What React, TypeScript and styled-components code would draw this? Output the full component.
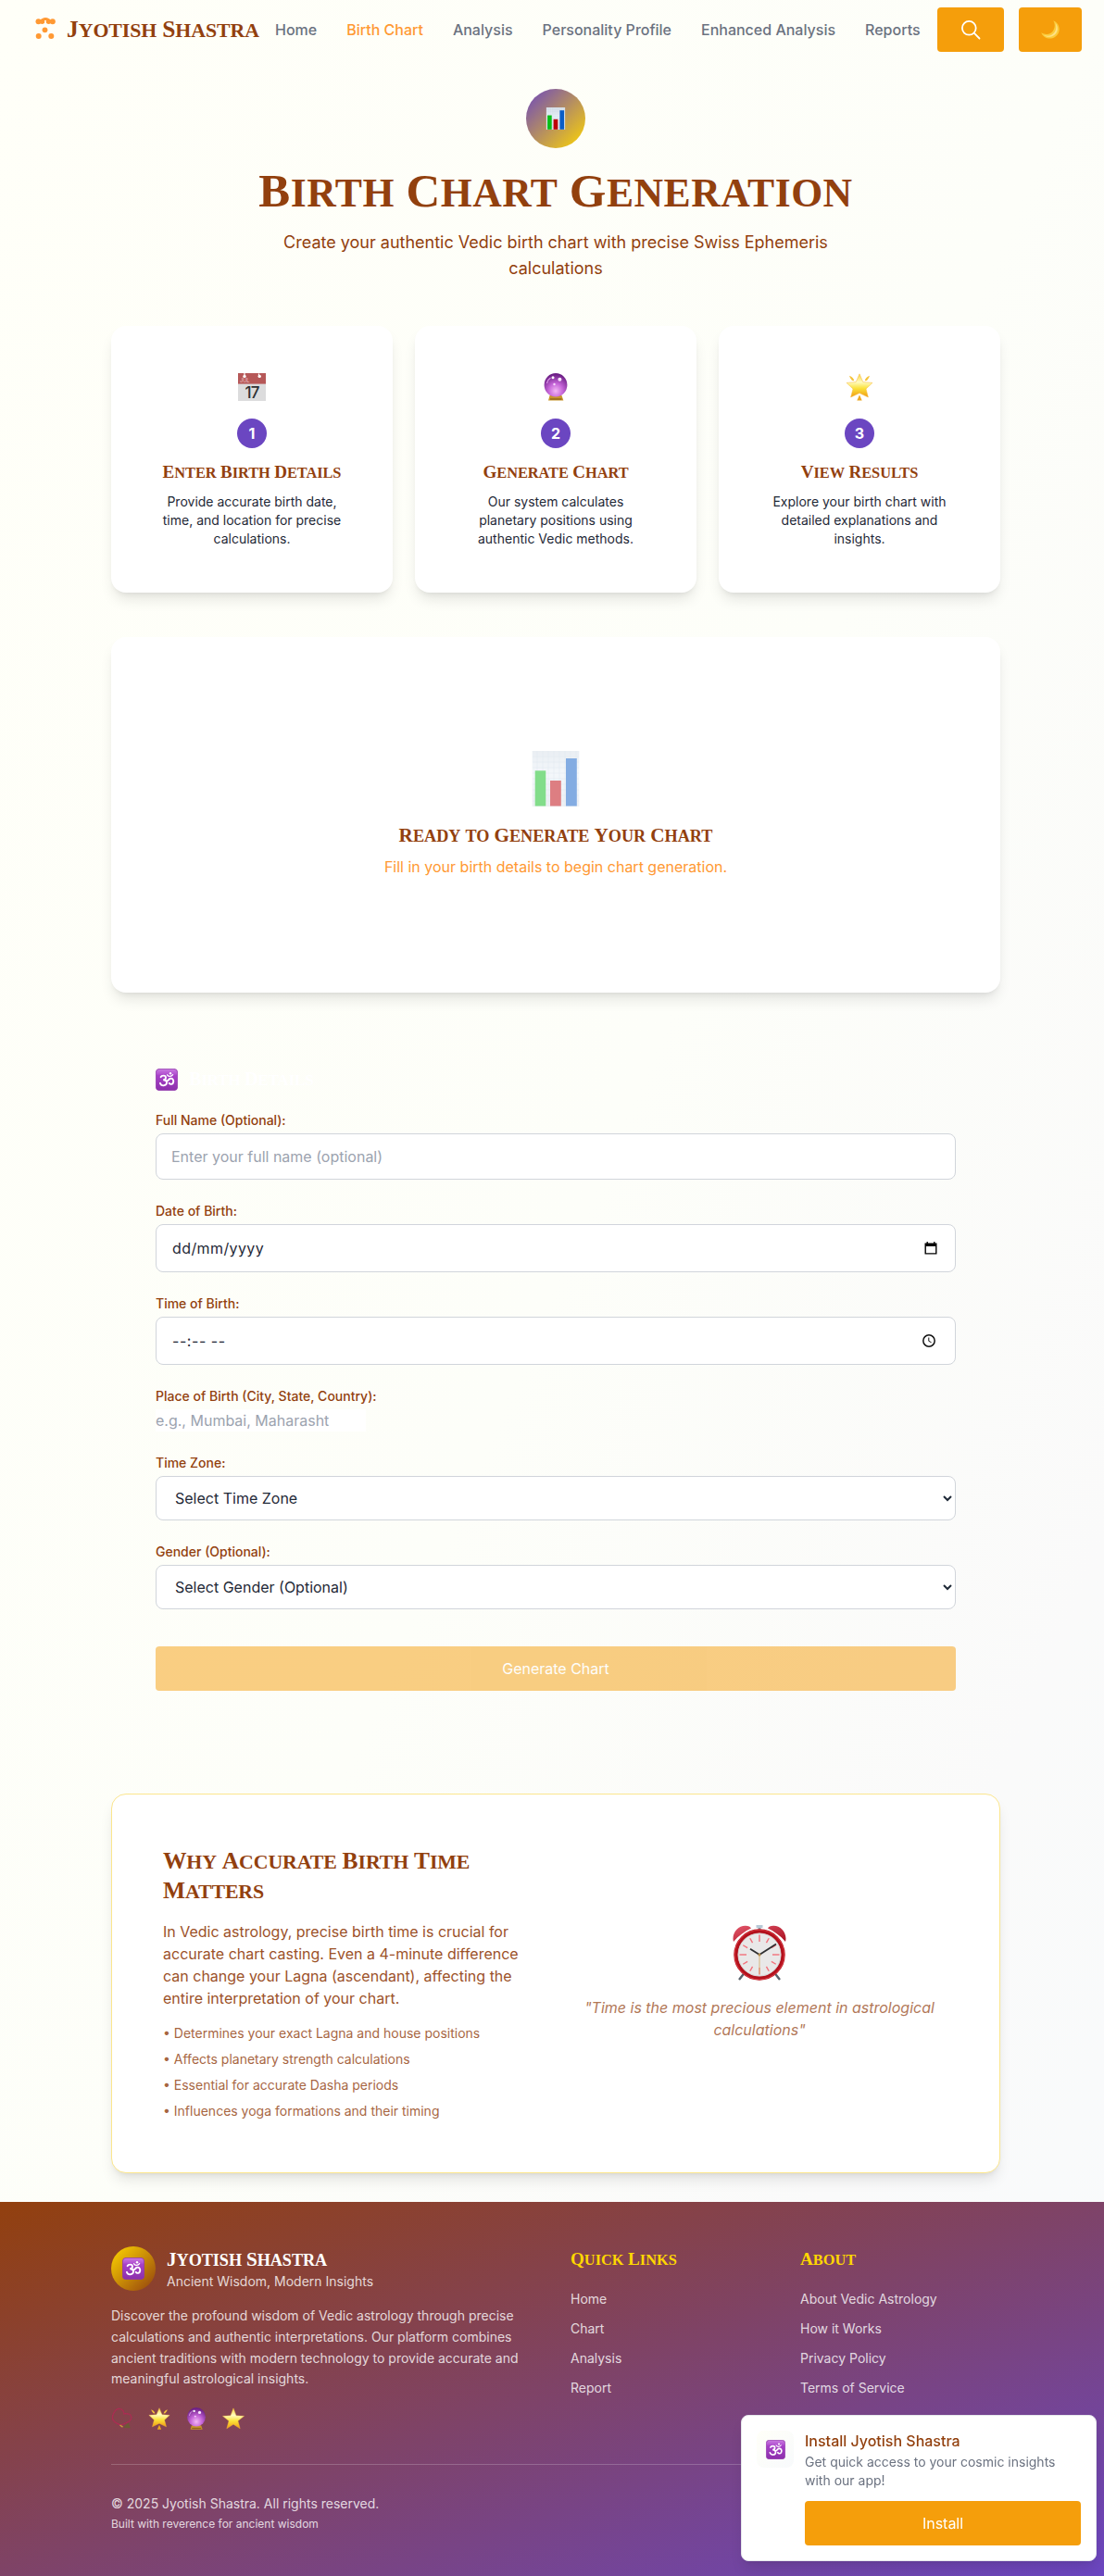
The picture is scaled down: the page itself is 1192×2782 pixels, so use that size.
import React from "react";
import styled, { createGlobalStyle, css } from "styled-components";

const sans = `Inter, "Liberation Sans", sans-serif`;
const serif = `"Liberation Serif", serif`;
const brown = "#92400e";
const amber = "#f59e0b";
const saffron = "#ff9933";

const GlobalStyle = createGlobalStyle`
  *, *::before, *::after { box-sizing: border-box; }
  body {
    margin: 0;
    font-family: ${sans};
    font-size: 16px;
    line-height: 24px;
    color: #1f2937;
  }
  h1, h2, h3, h4, p, ul { margin: 0; padding: 0; font-size: inherit; font-weight: inherit; }
  ul { list-style: none; }
  a { color: inherit; text-decoration: none; }
  svg { display: block; flex: none; }
`;

/* ---------- display lettering ---------- */

const Word = styled.span`
  white-space: nowrap;
`;
const Initial = styled.span`
  font-size: 1.06em;
  line-height: 1;
`;
const Tail = styled.span`
  font-size: 0.91em;
  line-height: 1;
  text-transform: uppercase;
`;

function Caps({ children }: { children: string }) {
  return (
    <>
      {children.split(" ").map((word, i) => {
        const lead = /^[A-Z]/.test(word) ? word[0] : "";
        return (
          <React.Fragment key={i}>
            {i > 0 && " "}
            <Word>
              {lead && <Initial>{lead}</Initial>}
              <Tail>{word.slice(lead.length)}</Tail>
            </Word>
          </React.Fragment>
        );
      })}
    </>
  );
}

const display = css<{ $size: number; $track?: number }>`
  font-family: ${serif};
  font-weight: 700;
  font-size: ${(p) => p.$size}px;
  letter-spacing: ${(p) => p.$track ?? 0}px;
  color: ${brown};
`;

/* ---------- drawings ---------- */

type IconProps = { size: number };

const BarChart = ({ size }: IconProps) => (
  <svg width={size} height={size} viewBox="0 0 60 60">
    <defs>
      <linearGradient id="paper" x1="0" y1="0" x2="0" y2="1">
        <stop offset="0" stopColor="#d6dfe8" />
        <stop offset=".4" stopColor="#eaf1f8" />
        <stop offset="1" stopColor="#dce2ea" />
      </linearGradient>
    </defs>
    <rect x="4.7" y="0" width="50.6" height="60" fill="url(#paper)" />
    <path
      d="M10 0v60M16 0v60M22 0v60M28 0v60M34 0v60M40 0v60M46 0v60M52 0v60M5 6h50M5 12h50M5 18h50M5 24h50M5 30h50M5 36h50M5 42h50M5 48h50M5 54h50"
      stroke="#c3d2e2"
      strokeWidth=".5"
    />
    <rect x="7.7" y="21.3" width="11.6" height="38.2" fill="#08bd17" />
    <rect x="24" y="32" width="11.8" height="27.5" fill="#bd0008" />
    <rect x="41" y="8" width="11.8" height="51.5" fill="#0a5cc7" />
  </svg>
);

const CalendarPage = ({ size }: IconProps) => (
  <svg width={size} height={size} viewBox="0 0 30 30">
    <rect width="30" height="30" fill="#dcdcdd" />
    <rect width="30" height="11.6" fill="#b65858" />
    <path d="M7 0v3.6M22.5 0.6v3" stroke="#fff" strokeWidth="1.2" />
    <circle cx="7" cy="3.4" r="1.7" fill="#fff" />
    <circle cx="23.2" cy="3.4" r="1.7" fill="#fff" />
    <text x="2" y="10" fontFamily="Inter" fontSize="5.6" fill="#f1c9c9">JUL</text>
    <text x="15" y="26.8" textAnchor="middle" fontFamily="Inter" fontWeight="500" fontSize="17" letterSpacing="-1" fill="#2f3033">17</text>
  </svg>
);

const CrystalBall = ({ size }: IconProps) => (
  <svg width={size} height={size} viewBox="0 0 30 30">
    <defs>
      <radialGradient id="orb" cx=".5" cy=".75" r=".7">
        <stop offset="0" stopColor="#f3b7f5" />
        <stop offset=".45" stopColor="#c565d8" />
        <stop offset="1" stopColor="#6d1f86" />
      </radialGradient>
    </defs>
    <path d="M7 29.6L8.6 24H21.4L23.4 29.6Z" fill="#c8952b" />
    <path d="M9 28h12.5" stroke="#7a5313" strokeWidth="1" />
    <ellipse cx="15" cy="12.8" rx="12.4" ry="12.7" fill="url(#orb)" />
    <circle cx="12" cy="4.8" r="1.5" fill="#fff" />
    <circle cx="19.4" cy="6.8" r="2" fill="#fbe6ff" />
    <circle cx="13.5" cy="12" r="1.2" fill="#f7d8fb" />
    <path d="M5.5 11c.6-3 2-4.8 4-6" stroke="#dd9bea" strokeWidth="1.2" fill="none" />
  </svg>
);

const StarFill = () => (
  <defs>
    <linearGradient id="gold" x1="0" y1="0" x2="0" y2="1">
      <stop offset="0" stopColor="#fbd53f" />
      <stop offset=".35" stopColor="#fffbc0" />
      <stop offset=".62" stopColor="#fbe23b" />
      <stop offset="1" stopColor="#f09a12" />
    </linearGradient>
  </defs>
);

const GlowingStar = ({ size }: IconProps) => (
  <svg width={size} height={size} viewBox="0 0 30 30">
    <StarFill />
    <path
      d="M15 .8L18.8 9.6L29 10.4L22 17L24.4 26L15 21.6L5.6 26L8 17L1 10.4L11.2 9.6Z"
      fill="url(#gold)"
      stroke="#f6b93c"
      strokeWidth=".5"
      strokeLinejoin="round"
    />
    <path d="M4 2.8Q8.6 4.6 9.3 8.2L7 7.9Q4.6 5.6 4 2.8ZM26 2.8Q21.400 4.6 20.700 8.2L23 7.9Q25.400 5.6 26 2.8Z" fill="#f5c33b" />
    <path d="M15 23.400L17.700 29.6H12.300Z" fill="#eea71f" />
  </svg>
);

const Star = ({ size }: IconProps) => (
  <svg width={size} height={size} viewBox="0 0 30 30">
    <StarFill />
    <path
      d="M15 1L18.800 11L29.500 11.600L21.200 18.200L24 28.500L15 22.800L6 28.500L8.800 18.200L.5 11.600L11.200 11Z"
      fill="url(#gold)"
      stroke="#f6b93c"
      strokeWidth=".5"
      strokeLinejoin="round"
    />
  </svg>
);

const PrayerBeads = ({ size }: IconProps) => (
  <svg width={size} height={size} viewBox="0 0 24 24" fill="none">
    <path
      d="M9.500 18.500C4.500 17 1 14 1.500 10C2 6 5 1.500 8.500 1.400C12 1.400 13.800 4 14 7C18 6 22 7.500 21.800 10.800C21.500 14 18.500 16 15 17.200C12.500 18.300 11.500 18.900 9.500 18.500Z"
      stroke="#bb2456"
      strokeWidth="1.200"
      strokeDasharray="1.300 .4"
    />
    <path d="M9.500 19l3 2.200" stroke="#c99a3c" strokeWidth="1.500" />
    <path d="M13 21.800l5.500-5.300 2.500 5.800z" fill="#6c5a35" />
  </svg>
);

const Moon = ({ size }: IconProps) => (
  <svg width={size} height={size} viewBox="0 0 20 20">
    <path d="M13.200 .2C21 3.200 22 13.500 15 18C9.500 21.500 2.500 19 .2 13.200C5 16.200 10.500 15.200 13.200 11C15.300 7.600 15.200 3.400 13.200 .2Z" fill="#fbcb3c" />
    <path d="M15.500 3C19 7 18.500 13 14.200 16C10 18.800 5.500 18 3 16C8 17.500 12 16.500 14.500 13C16.600 10 16.800 6.500 15.500 3Z" fill="#fde28a" />
  </svg>
);

const Om = ({ size }: IconProps) => (
  <svg width={size} height={size} viewBox="0 0 24 24" fill="none">
    <defs>
      <linearGradient id="tile" x1="0" y1="0" x2="0" y2="1">
        <stop offset="0" stopColor="#c97be0" />
        <stop offset=".22" stopColor="#b455d2" />
        <stop offset=".3" stopColor="#a741c8" />
        <stop offset="1" stopColor="#8c2fab" />
      </linearGradient>
    </defs>
    <rect x=".4" y=".4" width="23.200" height="23.200" rx="3.600" fill="url(#tile)" stroke="#8f35ab" strokeWidth=".8" />
    <g stroke="#fff" strokeWidth="1.900" strokeLinecap="round">
      <path d="M5.600 9.200C6.300 7.300 11 6.800 11 9.700C11 11.700 9.500 12.200 8.200 12.200C10.200 12.100 12.200 13.200 12 15.500C11.700 18.800 6.200 19.600 4.900 15.800" />
      <path d="M11.500 13.300C13.500 14.200 13.800 11.200 16 10.700C18.500 10.300 19.600 12.500 19.200 14.500C18.800 17.200 15.800 17.600 14.700 15.700" />
      <path d="M12.600 6.800C14 9 17 8.900 18.600 6.600" strokeWidth="1.300" />
    </g>
    <circle cx="16" cy="5.200" r="1.200" fill="#fff" />
  </svg>
);

const AlarmClock = ({ size }: IconProps) => (
  <svg width={size} height={size} viewBox="0 0 60 60" fill="none">
    <defs>
      <linearGradient id="bell" x1="0" y1="0" x2="1" y2="1">
        <stop offset="0" stopColor="#e2566a" />
        <stop offset="1" stopColor="#a90f20" />
      </linearGradient>
    </defs>
    <path d="M13.500 52L8 59M46.500 52L52 59" stroke="#59616b" strokeWidth="2.400" />
    <path d="M30 2v5" stroke="#8d99a6" strokeWidth="3" />
    <path d="M26.500 1.500h7" stroke="#b9c9d6" strokeWidth="3" />
    <path d="M2 18C-.5 9 7 .5 15 .8C18 1 20.500 2 21 3.500C14 7 7 11.500 2 18ZM58 18C60.500 9 53 .5 45 .8C42 1 39.500 2 39 3.500C46 7 53 11.500 58 18Z" fill="url(#bell)" />
    <circle cx="30" cy="32" r="25.500" fill="#e9e8e8" stroke="#b3101c" strokeWidth="4.400" />
    <circle cx="30" cy="32" r="26.800" stroke="#e0444b" strokeWidth=".8" />
    <circle cx="30" cy="32" r="23" stroke="#cfcfcf" strokeWidth=".8" />
    <g stroke="#f2707a" strokeWidth="1.400">
      {Array.from({ length: 12 }, (_, i) => (
        <path key={i} d={i % 3 ? "M30 11.500v5.600" : "M30 10.500v7.500"} transform={`rotate(${i * 30} 30 32)`} />
      ))}
    </g>
    <path d="M30 32v21" stroke="#d8b77d" strokeWidth="1" />
    <path d="M30 32L20 25.800M30 32L48 20.500" stroke="#2e2f31" strokeWidth="1.800" />
    <circle cx="30" cy="32" r="1.500" fill="#b18a4a" />
  </svg>
);

const LogoMark = () => (
  <svg width="32" height="32" viewBox="0 0 32 32" fill={saffron}>
    <circle cx="8.500" cy="7.300" r="3" />
    <circle cx="12.500" cy="7.300" r="2.700" />
    <circle cx="19.500" cy="7.300" r="2.700" />
    <circle cx="23.800" cy="7.300" r="3" />
    <path d="M11 6.500C11.500 1.800 20.800 1.800 21.300 6.500L18 7.500V6H14.500V7.500Z" />
    <path d="M13.500 9H15V6.500H13.500zM17.600 9h1.500V6.500h-1.500z" />
    <circle cx="15.500" cy="16.300" r="2.900" />
    <circle cx="8.700" cy="23" r="3" />
    <circle cx="22.300" cy="23" r="3" />
  </svg>
);

const SearchIcon = () => (
  <svg width="24" height="24" viewBox="0 0 24 24" fill="none" stroke="#fff" strokeWidth="1.800" strokeLinecap="round">
    <circle cx="10.300" cy="10.300" r="7.400" />
    <path d="M15.700 15.700L21.500 21.500" />
  </svg>
);

const DateIcon = () => (
  <svg width="16" height="16" viewBox="0 0 16 16">
    <path d="M1.500 2.500h13v12h-13zM2.900 6v7.200h10.200V6z" fill="#000" fillRule="evenodd" />
    <path d="M4.200 1v2M11.800 1v2" stroke="#000" strokeWidth="1.300" />
  </svg>
);

const TimeIcon = () => (
  <svg width="16" height="16" viewBox="0 0 16 16" fill="none" stroke="#111">
    <circle cx="8" cy="8" r="6.200" strokeWidth="1.500" />
    <path d="M7.800 4.500V8.300L10.600 9.800" strokeWidth="1" />
  </svg>
);

/* ---------- page shell ---------- */

const Page = styled.div`
  display: flex;
  flex-direction: column;
  min-height: 2782px;
  background: linear-gradient(to bottom right, #fffff8, #fdfef9 50%, #fafafa 80%, #f8fafc);
`;

const Header = styled.header`
  display: flex;
  align-items: center;
  justify-content: space-between;
  height: 64px;
  padding: 0 24px 0 33px;
`;
const Brand = styled.a`
  display: flex;
  align-items: center;
  gap: 7px;
  width: 264px;
  white-space: nowrap;
`;
const BrandName = styled.span`
  ${display}
  line-height: 32px;
`;
const Nav = styled.nav`
  display: flex;
  gap: 32px;
  width: 715px;
  white-space: nowrap;
`;
const NavLink = styled.a<{ $active?: boolean }>`
  font-weight: 500;
  color: ${(p) => (p.$active ? saffron : "#6b7280")};
`;
const Button = styled.button<{ $width?: string; $faded?: boolean }>`
  display: flex;
  align-items: center;
  justify-content: center;
  width: ${(p) => p.$width ?? "100%"};
  height: 48px;
  padding: 0;
  border: 0;
  border-radius: 4px;
  background: ${amber};
  color: #fff;
  font: 400 16px/24px ${sans};
  opacity: ${(p) => (p.$faded ? 0.5 : 1)};
`;
const HeaderActions = styled.div`
  display: flex;
  gap: 16px;
`;

const Main = styled.main`
  display: flex;
  flex-direction: column;
  width: 960px;
  margin: 0 112px 0 120px;
  padding: 32px 0 31px;
`;

/* ---------- hero ---------- */

const Hero = styled.section`
  display: flex;
  flex-direction: column;
  align-items: center;
  text-align: center;
  margin-bottom: 48px;
`;
const HeroBadge = styled.div`
  display: flex;
  align-items: center;
  justify-content: center;
  width: 64px;
  height: 64px;
  border-radius: 50%;
  background: linear-gradient(135deg, #6b46c1, #ffd700);
`;
const HeroTitle = styled.h1`
  ${display}
  margin-top: 17px;
  line-height: 60px;
  white-space: nowrap;
`;
const HeroText = styled.p`
  width: 672px;
  margin-top: 11px;
  font-size: 18px;
  line-height: 28px;
  color: ${brown};
`;

/* ---------- cards ---------- */

const Card = styled.section`
  border-radius: 16px;
  background: #fff;
  box-shadow: 0 10px 15px -3px rgba(0, 0, 0, 0.1), 0 4px 6px -4px rgba(0, 0, 0, 0.1);
`;
const Steps = styled.div`
  display: grid;
  grid-template-columns: repeat(3, 1fr);
  gap: 24px;
  margin-bottom: 48px;
`;
const StepCard = styled(Card)`
  display: flex;
  flex-direction: column;
  align-items: center;
  height: 288px;
  padding: 51px 48px 48px;
  text-align: center;
`;
const StepNumber = styled.span`
  display: flex;
  align-items: center;
  justify-content: center;
  width: 32px;
  height: 32px;
  margin-top: 19px;
  border-radius: 50%;
  background: #6b46c1;
  color: #fff;
  font-weight: 700;
`;
const StepTitle = styled.h3`
  ${display}
  margin-top: 12px;
  line-height: 28px;
  white-space: nowrap;
`;
const StepText = styled.p`
  margin-top: 8px;
  font-size: 14px;
  line-height: 20px;
`;

const ReadyCard = styled(Card)`
  display: flex;
  flex-direction: column;
  align-items: center;
  height: 384px;
  padding-top: 123px;
`;
const Faded = styled.div`
  opacity: 0.5;
`;
const ReadyTitle = styled.h3`
  ${display}
  margin-top: 17px;
  line-height: 28px;
`;
const ReadyText = styled.p`
  margin-top: 8px;
  color: ${saffron};
`;

/* ---------- form ---------- */

const Form = styled.form`
  display: flex;
  flex-direction: column;
  margin: 82px 48px 0;
`;
const FormHead = styled.div`
  display: flex;
  align-items: center;
  gap: 12px;
  height: 24px;
  margin-bottom: 22px;
`;
const FormTitle = styled.h2`
  ${display}
  color: #fff;
`;
const Field = styled.div<{ $gap: number }>`
  display: flex;
  flex-direction: column;
  align-items: flex-start;
  gap: 4px;
  margin-bottom: ${(p) => p.$gap}px;
`;
const Label = styled.label`
  font-size: 14px;
  font-weight: 500;
  line-height: 20px;
  color: ${brown};
`;
const boxed = css`
  width: 100%;
  border: 1px solid #d1d5db;
  border-radius: 8px;
  background: #fff;
  font: 400 16px/24px ${sans};
  color: #1f2937;
`;
const TextInput = styled.input`
  ${boxed}
  height: 50px;
  padding: 12px 16px;
  &::placeholder { color: #9ca3af; opacity: 1; }
`;
const PickerInput = styled.div<{ $end: number }>`
  ${boxed}
  display: flex;
  align-items: center;
  justify-content: space-between;
  height: 52px;
  padding: 0 ${(p) => p.$end}px 0 17px;
`;
const PickerText = styled.span<{ $track: number }>`
  letter-spacing: ${(p) => p.$track}px;
`;
const PlainInput = styled.input`
  width: 227px;
  height: 24px;
  padding: 0;
  border: 0;
  background: #fff;
  font: 400 16px/24px ${sans};
  &::placeholder { color: #9ca3af; opacity: 1; }
`;
const Select = styled.select`
  ${boxed}
  height: 48px;
  padding: 0 0 0 16px;
`;
const Submit = styled.div`
  margin-top: 12px;
  margin-bottom: 111px;
`;

/* ---------- birth time note ---------- */

const NoteCard = styled(Card)`
  display: grid;
  grid-template-columns: 1fr 1fr;
  gap: 32px;
  height: 410px;
  padding: 56px 55px 52px;
  border: 1px solid #fbe68e;
`;
const NoteTitle = styled.h2`
  ${display}
  line-height: 32px;
`;
const NoteText = styled.p`
  margin-top: 16px;
  color: ${brown};
  opacity: 0.9;
`;
const NoteList = styled.ul`
  display: flex;
  flex-direction: column;
  gap: 8px;
  margin-top: 16px;
  font-size: 14px;
  line-height: 20px;
  color: ${brown};
  opacity: 0.8;
`;
const NoteAside = styled.div`
  display: flex;
  flex-direction: column;
  align-items: center;
  padding-top: 85px;
  text-align: center;
`;
const Quote = styled.p`
  margin-top: 17px;
  font-style: italic;
  color: ${brown};
  opacity: 0.7;
`;

/* ---------- footer ---------- */

const Footer = styled.footer`
  flex: 1;
  padding: 48px 116px 0 120px;
  background: linear-gradient(to bottom right, #92400e, #6b46c1);
  color: rgba(255, 255, 255, 0.8);
  font-size: 14px;
  line-height: 20px;
`;
const FooterGrid = styled.div`
  display: grid;
  grid-template-columns: 464px 216px 216px;
  gap: 32px;
  height: 235px;
`;
const FooterBrand = styled.div`
  display: flex;
  align-items: center;
  gap: 12px;
`;
const FooterBadge = styled.div`
  display: flex;
  align-items: center;
  justify-content: center;
  width: 48px;
  height: 48px;
  border-radius: 50%;
  background: linear-gradient(135deg, #ffd700, #92400e);
`;
const FooterName = styled.h3`
  ${display}
  line-height: 28px;
  color: #fff;
`;
const FooterText = styled.p`
  margin-top: 16px;
  line-height: 22.75px;
`;
const FooterIcons = styled.div`
  display: flex;
  gap: 16px;
  margin-top: 19px;
`;
const FooterTitle = styled.h4`
  ${display}
  line-height: 28px;
  color: #ffd700;
`;
const FooterLinks = styled.ul`
  display: flex;
  flex-direction: column;
  gap: 12px;
  margin-top: 19px;
`;
const Legal = styled.div`
  width: 960px;
  padding-top: 32px;
  border-top: 1px solid rgba(255, 255, 255, 0.2);
`;
const Small = styled.p`
  margin-top: 3px;
  font-size: 12px;
  line-height: 18px;
`;

/* ---------- install prompt ---------- */

const Prompt = styled.aside`
  position: fixed;
  right: 8px;
  bottom: 16px;
  display: flex;
  gap: 12px;
  width: 384px;
  height: 158px;
  padding: 16px;
  border: 1px solid #e5e7eb;
  border-radius: 8px;
  background: #fff;
  box-shadow: 0 10px 15px -3px rgba(0, 0, 0, 0.1), 0 4px 6px -4px rgba(0, 0, 0, 0.1);
`;
const PromptIcon = styled.div`
  display: flex;
  flex: none;
  align-items: center;
  justify-content: center;
  width: 40px;
  height: 40px;
  border-radius: 8px;
  background: linear-gradient(135deg, #fffff8, #f8fafc);
`;
const PromptBody = styled.div`
  flex: 1;
`;
const PromptTitle = styled.h3`
  margin-top: -1px;
  font-weight: 500;
  color: ${brown};
`;
const PromptText = styled.p`
  margin: 1px 0 12px;
  font-size: 14px;
  line-height: 20px;
  color: #6b7280;
`;

const navItems = ["Home", "Birth Chart", "Analysis", "Personality Profile", "Enhanced Analysis", "Reports"];

const steps = [
  { icon: CalendarPage, title: "Enter Birth Details", text: "Provide accurate birth date, time, and location for precise calculations." },
  { icon: CrystalBall, title: "Generate Chart", text: "Our system calculates planetary positions using authentic Vedic methods." },
  { icon: GlowingStar, title: "View Results", text: "Explore your birth chart with detailed explanations and insights." },
];

const reasons = [
  "Determines your exact Lagna and house positions",
  "Affects planetary strength calculations",
  "Essential for accurate Dasha periods",
  "Influences yoga formations and their timing",
];

const linkGroups = [
  { title: "Quick Links", links: ["Home", "Chart", "Analysis", "Report"] },
  { title: "About", links: ["About Vedic Astrology", "How it Works", "Privacy Policy", "Terms of Service"] },
];

export default function App() {
  return (
    <Page>
      <GlobalStyle />
      <Header>
        <Brand>
          <LogoMark />
          <BrandName $size={24} $track={-0.05}><Caps>Jyotish Shastra</Caps></BrandName>
        </Brand>
        <Nav>
          {navItems.map((item) => (
            <NavLink key={item} $active={item === "Birth Chart"}>{item}</NavLink>
          ))}
        </Nav>
        <HeaderActions>
          <Button $width="72px" aria-label="Search"><SearchIcon /></Button>
          <Button $width="68px" aria-label="Theme"><Moon size={20} /></Button>
        </HeaderActions>
      </Header>

      <Main>
        <Hero>
          <HeroBadge><BarChart size={24} /></HeroBadge>
          <HeroTitle $size={48} $track={0.5}><Caps>Birth Chart Generation</Caps></HeroTitle>
          <HeroText>Create your authentic Vedic birth chart with precise Swiss Ephemeris calculations</HeroText>
        </Hero>

        <Steps>
          {steps.map(({ icon: Icon, title, text }, i) => (
            <StepCard key={title}>
              <Icon size={30} />
              <StepNumber>{i + 1}</StepNumber>
              <StepTitle $size={18} $track={-0.05}><Caps>{title}</Caps></StepTitle>
              <StepText>{text}</StepText>
            </StepCard>
          ))}
        </Steps>

        <ReadyCard>
          <Faded><BarChart size={60} /></Faded>
          <ReadyTitle $size={20}><Caps>Ready to Generate Your Chart</Caps></ReadyTitle>
          <ReadyText>Fill in your birth details to begin chart generation.</ReadyText>
        </ReadyCard>

        <Form>
          <FormHead>
            <Om size={24} />
            <FormTitle $size={19} $track={-0.3}><Caps>Birth Details</Caps></FormTitle>
          </FormHead>
          <Field $gap={24}>
            <Label>Full Name (Optional):</Label>
            <TextInput placeholder="Enter your full name (optional)" />
          </Field>
          <Field $gap={24}>
            <Label>Date of Birth:</Label>
            <PickerInput $end={18}>
              <PickerText $track={0.4}>dd/mm/yyyy</PickerText>
              <DateIcon />
            </PickerInput>
          </Field>
          <Field $gap={24}>
            <Label>Time of Birth:</Label>
            <PickerInput $end={20}>
              <PickerText $track={0.55}>--:-- --</PickerText>
              <TimeIcon />
            </PickerInput>
          </Field>
          <Field $gap={24}>
            <Label>Place of Birth (City, State, Country):</Label>
            <PlainInput placeholder="e.g., Mumbai, Maharasht" />
          </Field>
          <Field $gap={24}>
            <Label>Time Zone:</Label>
            <Select><option>Select Time Zone</option></Select>
          </Field>
          <Field $gap={28}>
            <Label>Gender (Optional):</Label>
            <Select><option>Select Gender (Optional)</option></Select>
          </Field>
          <Submit>
            <Button type="button" $faded>Generate Chart</Button>
          </Submit>
        </Form>

        <NoteCard>
          <div>
            <NoteTitle $size={24} $track={-0.1}><Caps>Why Accurate Birth Time Matters</Caps></NoteTitle>
            <NoteText>
              In Vedic astrology, precise birth time is crucial for accurate chart casting. Even a 4-minute
              difference can change your Lagna (ascendant), affecting the entire interpretation of your chart.
            </NoteText>
            <NoteList>
              {reasons.map((r) => <li key={r}>• {r}</li>)}
            </NoteList>
          </div>
          <NoteAside>
            <AlarmClock size={60} />
            <Quote>"Time is the most precious element in astrological calculations"</Quote>
          </NoteAside>
        </NoteCard>
      </Main>

      <Footer>
        <FooterGrid>
          <div>
            <FooterBrand>
              <FooterBadge><Om size={24} /></FooterBadge>
              <div>
                <FooterName $size={20} $track={-0.05}><Caps>Jyotish Shastra</Caps></FooterName>
                <p>Ancient Wisdom, Modern Insights</p>
              </div>
            </FooterBrand>
            <FooterText>
              Discover the profound wisdom of Vedic astrology through precise calculations and authentic
              interpretations. Our platform combines ancient traditions with modern technology to provide
              accurate and meaningful astrological insights.
            </FooterText>
            <FooterIcons>
              <PrayerBeads size={24} />
              <GlowingStar size={24} />
              <CrystalBall size={24} />
              <Star size={24} />
            </FooterIcons>
          </div>
          {linkGroups.map((group) => (
            <div key={group.title}>
              <FooterTitle $size={18}><Caps>{group.title}</Caps></FooterTitle>
              <FooterLinks>
                {group.links.map((link) => <li key={link}><a>{link}</a></li>)}
              </FooterLinks>
            </div>
          ))}
        </FooterGrid>
        <Legal>
          <p>© 2025 Jyotish Shastra. All rights reserved.</p>
          <Small>Built with reverence for ancient wisdom</Small>
        </Legal>
      </Footer>

      <Prompt>
        <PromptIcon><Om size={21} /></PromptIcon>
        <PromptBody>
          <PromptTitle>Install Jyotish Shastra</PromptTitle>
          <PromptText>Get quick access to your cosmic insights with our app!</PromptText>
          <Button>Install</Button>
        </PromptBody>
      </Prompt>
    </Page>
  );
}
